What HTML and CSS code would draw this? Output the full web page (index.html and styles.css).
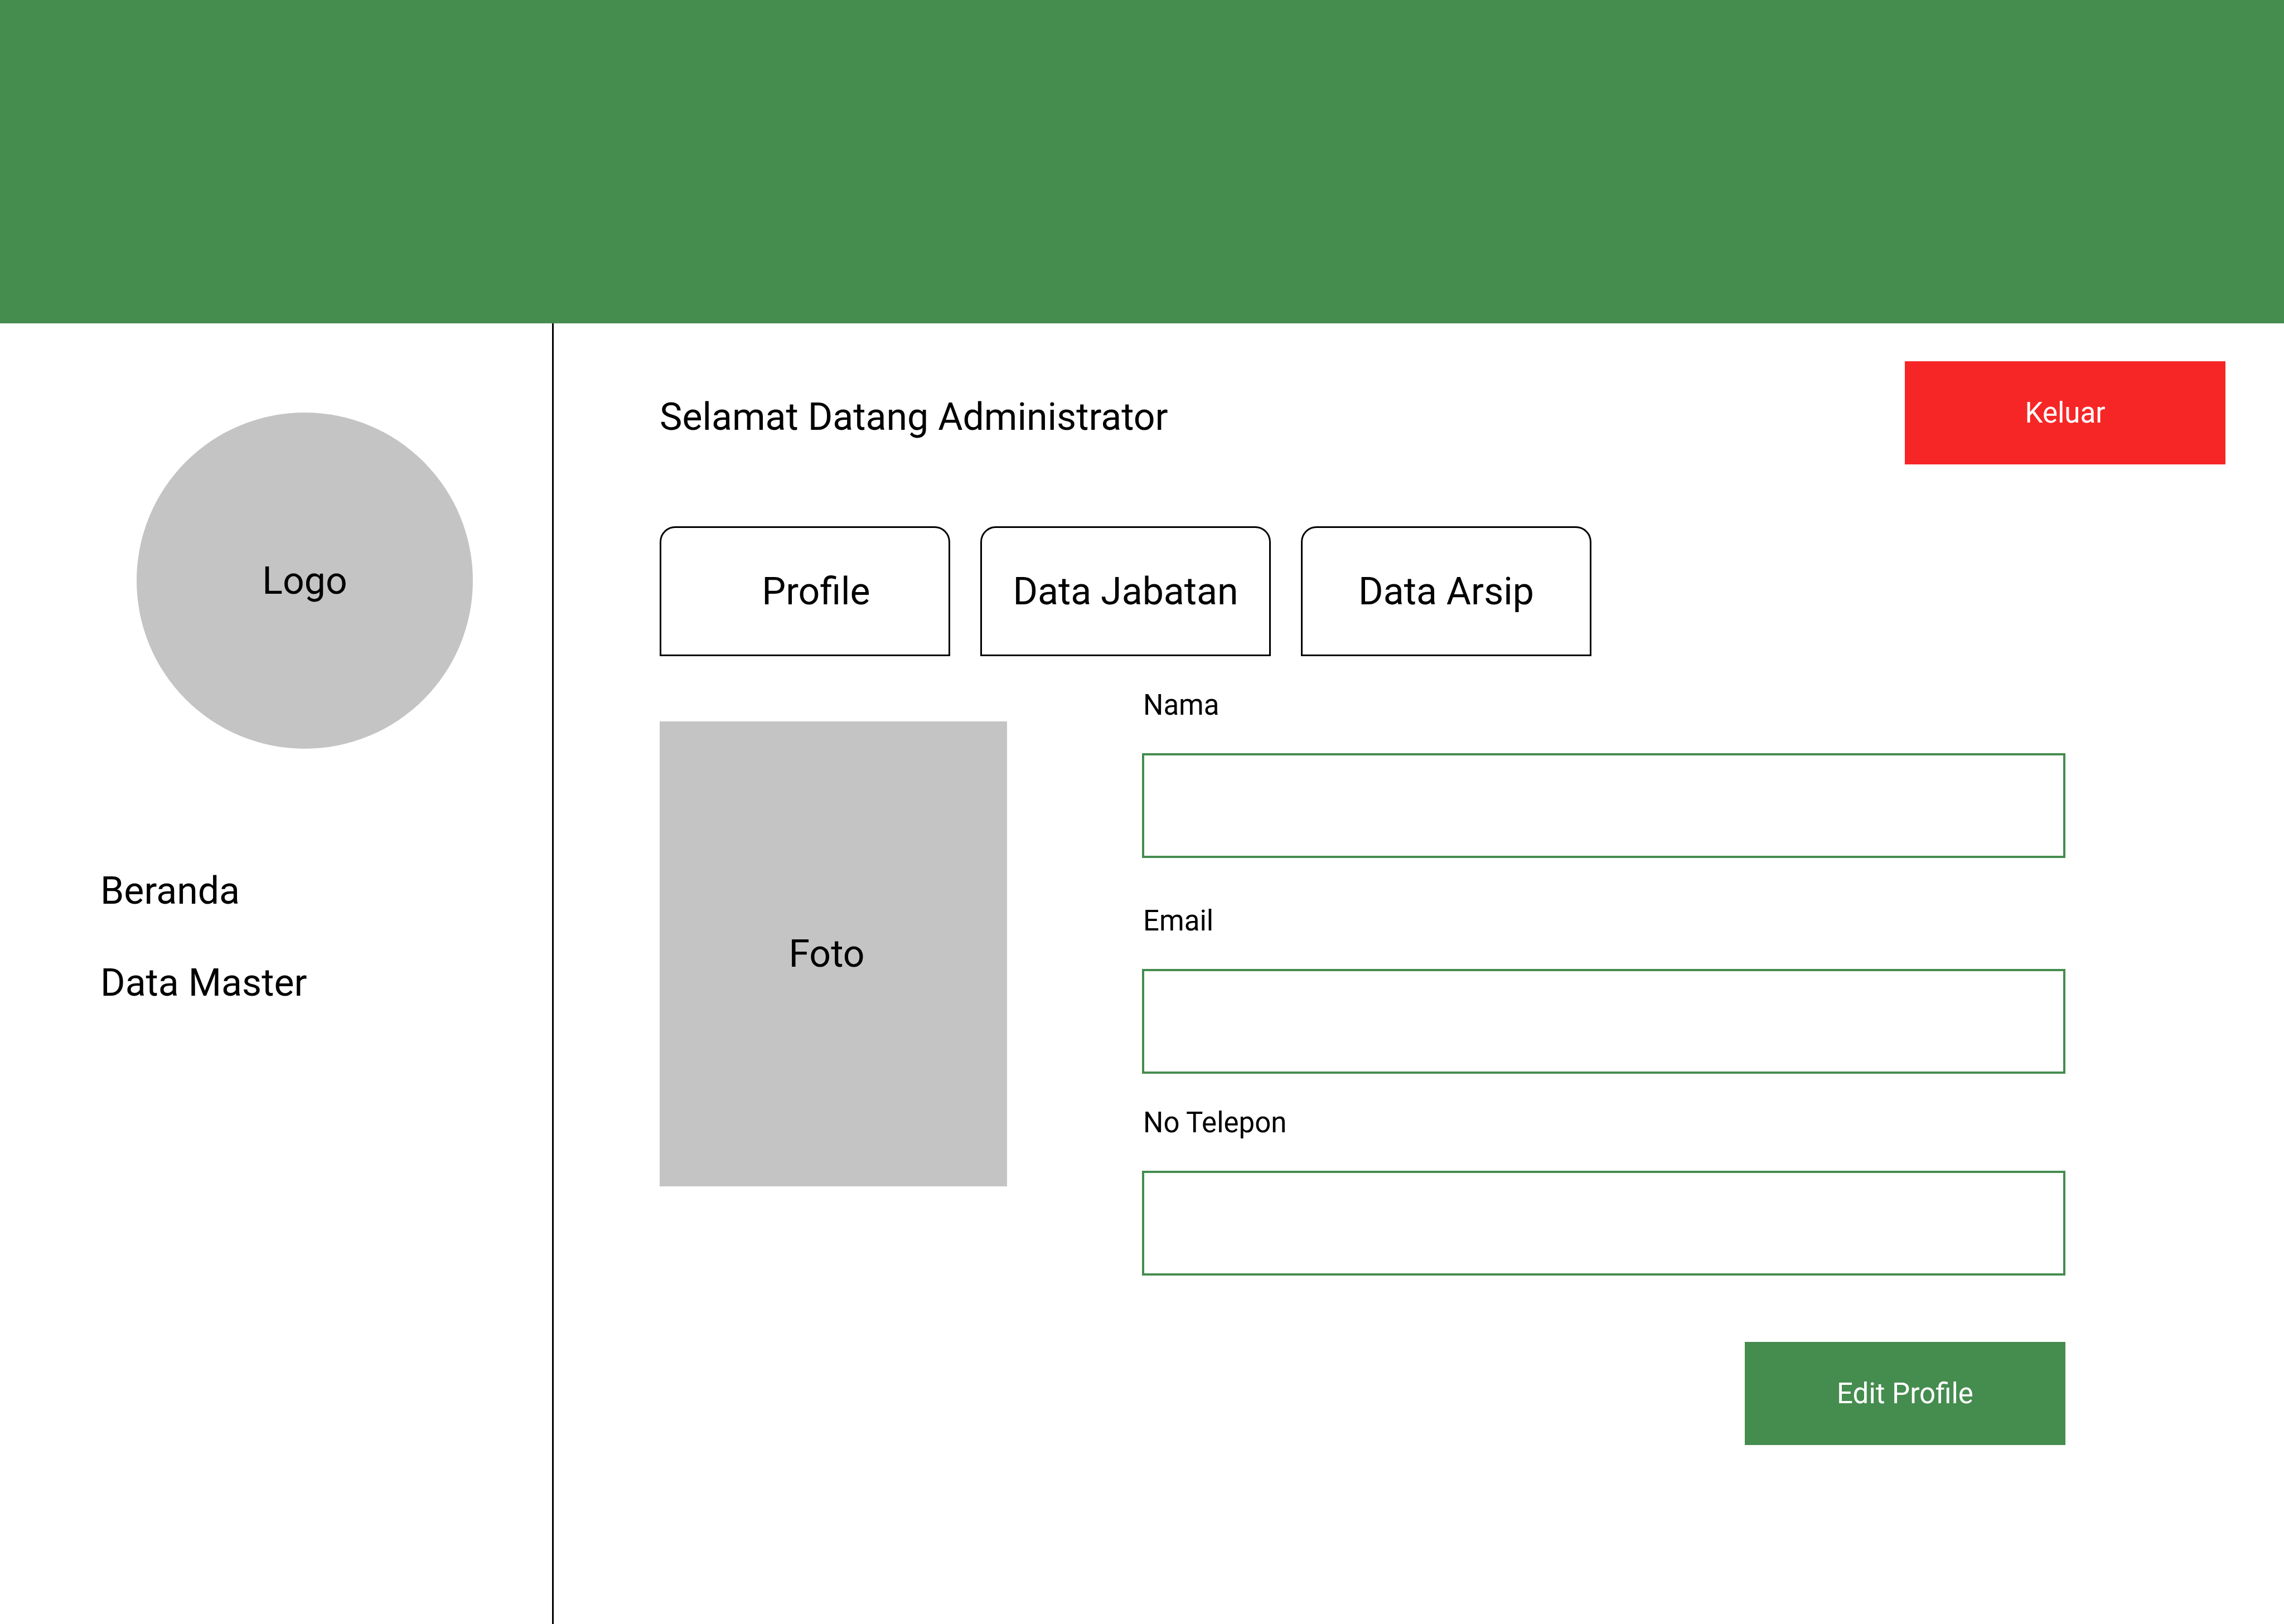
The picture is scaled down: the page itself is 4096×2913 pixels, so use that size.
FILE: index.html
```html
<!DOCTYPE html>
<html lang="id">
<head>
  <meta charset="utf-8">
  <meta name="viewport" content="width=device-width, initial-scale=1">
  <title>Profile</title>
  <link rel="stylesheet" href="styles.css">
</head>
<body class="page">
  <header class="banner"></header>
  <div class="layout">
    <aside class="sidebar">
      <div class="logo">Logo</div>
      <nav class="menu">
        <a class="menu-link" href="#beranda">Beranda</a>
        <a class="menu-link" href="#data-master">Data Master</a>
      </nav>
    </aside>
    <main class="content">
      <div class="topbar">
        <h1 class="welcome">Selamat Datang Administrator</h1>
        <button class="button button-danger" type="button">Keluar</button>
      </div>
      <nav class="tabs">
        <a class="tab tab-current" href="#profile" aria-current="page">Profile</a>
        <a class="tab" href="#data-jabatan">Data Jabatan</a>
        <a class="tab" href="#data-arsip">Data Arsip</a>
      </nav>
      <section class="profile">
        <div class="photo">Foto</div>
        <form class="form">
          <div class="identity">
            <div class="field">
              <label class="label" for="nama">Nama</label>
              <input class="input" id="nama" name="nama" type="text">
            </div>
            <div class="field">
              <label class="label" for="email">Email</label>
              <input class="input" id="email" name="email" type="email">
            </div>
          </div>
          <div class="field">
            <label class="label" for="telepon">No Telepon</label>
            <input class="input" id="telepon" name="telepon" type="tel">
          </div>
          <button class="button button-primary" type="button">Edit Profile</button>
        </form>
      </section>
    </main>
  </div>
</body>
</html>
```
FILE: styles.css
```css
* {
  box-sizing: border-box;
}

.page {
  display: flex;
  flex-direction: column;
  min-height: 100vh;
  margin: 0;
  background: #fff;
  color: #000;
  font-family: Roboto, "Liberation Sans", sans-serif;
  font-size: 68px;
  line-height: 80px;
}

.banner {
  flex: none;
  height: 580px;
  background: #458c4f;
}

.layout {
  display: flex;
  flex: 1;
}

/* Sidebar */

.sidebar {
  flex: none;
  width: 993px;
  padding: 160px 142px 0 180px;
  border-right: 3px solid #000;
}

.logo {
  display: flex;
  align-items: center;
  justify-content: center;
  width: 603px;
  aspect-ratio: 1;
  margin-left: auto;
  border-radius: 50%;
  background: #c4c4c4;
}

.menu {
  display: flex;
  flex-direction: column;
  gap: 85px;
  margin-top: 215px;
}

.menu-link {
  color: inherit;
  text-decoration: none;
}

/* Content */

.content {
  flex: 1;
  padding: 68px 105px 68px 190px;
}

.topbar {
  display: flex;
  align-items: flex-start;
  justify-content: space-between;
}

.welcome {
  margin: 0;
  padding-top: 60px;
  font-size: inherit;
  font-weight: 400;
}

.button {
  width: 575px;
  height: 185px;
  padding: 0;
  border: 0;
  color: #fff;
  font-family: inherit;
  font-size: 51px;
  line-height: 60px;
}

.button-danger {
  background: #f72626;
}

.button-primary {
  align-self: flex-end;
  margin-top: 119px;
  background: #458c4f;
}

.tabs {
  display: flex;
  gap: 54px;
  margin-top: 111px;
}

.tab {
  display: flex;
  align-items: center;
  justify-content: center;
  width: 521px;
  height: 233px;
  border: 3px solid #000;
  border-radius: 28px 28px 0 0;
  color: inherit;
  text-decoration: none;
}

.tab-current {
  padding-left: 40px;
}

.profile {
  display: flex;
  align-items: flex-start;
  gap: 242px;
  margin-top: 58px;
  padding-right: 287px;
}

.photo {
  display: flex;
  flex: none;
  align-items: center;
  justify-content: center;
  width: 623px;
  height: 834px;
  margin-top: 59px;
  padding-right: 24px;
  background: #c4c4c4;
}

.form {
  display: flex;
  flex: 1;
  flex-direction: column;
}

.identity {
  display: flex;
  flex-direction: column;
  gap: 83px;
  margin-bottom: 58px;
}

.field {
  display: flex;
  flex-direction: column;
  gap: 56px;
}

.label {
  padding-left: 2px;
  font-size: 51px;
  line-height: 60px;
}

.input {
  width: 100%;
  height: 188px;
  padding: 0 40px;
  border: 4px solid #458c4f;
  border-radius: 0;
  background: #fff;
  color: inherit;
  font-family: inherit;
  font-size: 51px;
}
```
